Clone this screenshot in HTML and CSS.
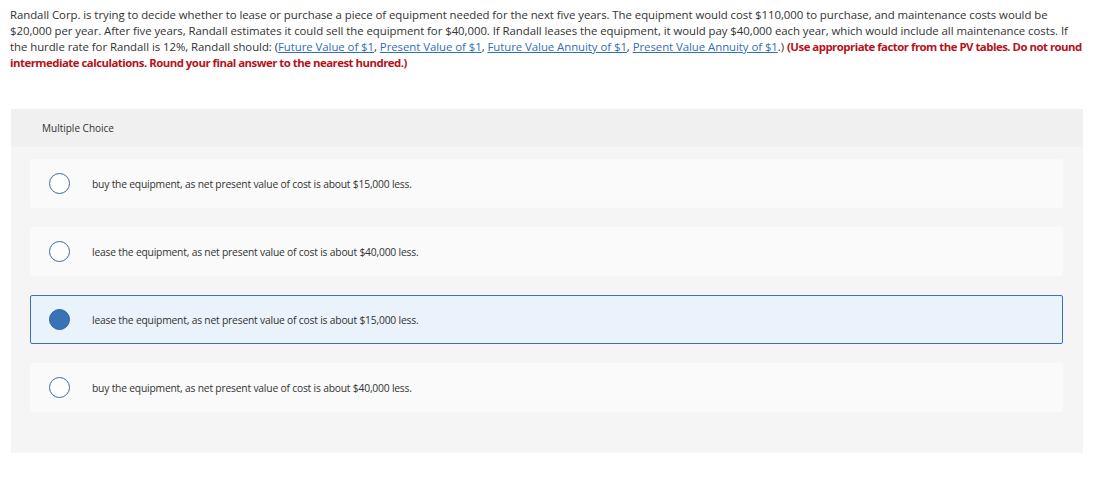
FILE: index.html
```html
<!DOCTYPE html>
<html>
<head>
<meta charset="utf-8">
<link rel="stylesheet" href="styles.css">
</head>
<body>
<div class="question">
<p class="prompt">Randall Corp. is trying to decide whether to lease or purchase a piece of equipment needed for the next five years. The equipment would cost $110,000 to purchase, and maintenance costs would be $20,000 per year. After five years, Randall estimates it could sell the equipment for $40,000. If Randall leases the equipment, it would pay $40,000 each year, which would include all maintenance costs. If the hurdle rate for Randall is 12%, Randall should: (<a href="#">Future Value of $1</a>, <a href="#">Present Value of $1</a>, <a href="#">Future Value Annuity of $1</a>, <a href="#">Present Value Annuity of $1</a>.) <strong class="note">(Use appropriate factor from the PV tables. Do not round intermediate calculations. Round your final answer to the nearest hundred.)</strong></p>
<div class="panel">
<div class="panel-head">Multiple Choice</div>
<div class="choices">
<div class="choice"><span class="radio"></span><span class="label">buy the equipment, as net present value of cost is about $15,000 less.</span></div>
<div class="choice"><span class="radio"></span><span class="label">lease the equipment, as net present value of cost is about $40,000 less.</span></div>
<div class="choice selected"><span class="radio"></span><span class="label">lease the equipment, as net present value of cost is about $15,000 less.</span></div>
<div class="choice"><span class="radio"></span><span class="label">buy the equipment, as net present value of cost is about $40,000 less.</span></div>
</div>
</div>
</div>
</body>
</html>
```
FILE: styles.css
```css
html, body { margin: 0; padding: 0; background: #fff; }
body {
  font-family: "Open Sans", "Liberation Sans", sans-serif;
  color: #333;
}
.question { padding: 7px 0 0 10px; }
.prompt {
  margin: 0;
  width: 1077px;
  font-size: 11.4px;
  line-height: 16px;
  letter-spacing: -0.05px;
}
.prompt a { color: #2f6fb5; text-decoration: underline; }
.note { color: #b5121b; font-weight: 700; letter-spacing: -0.5px; }
.panel {
  margin: 38px 0 0 1px;
  width: 1072px;
  background: #f5f5f5;
}
.panel-head {
  height: 38px;
  background: #f0f0f0;
  padding-left: 31px;
  display: flex;
  align-items: center;
  font-size: 10px;
  color: #333;
}
.choices {
  padding: 12px 20px 41px 19px;
  display: flex;
  flex-direction: column;
  gap: 19px;
}
.choice {
  height: 49px;
  box-sizing: border-box;
  background: #fafafa;
  border-radius: 2px;
  display: flex;
  align-items: center;
  padding-left: 19px;
  font-size: 10.3px;
  color: #333;
}
.choice.selected {
  background: #eaf2fb;
  border: 1px solid #3a72b8;
  padding-left: 18px;
}
.radio {
  width: 21px;
  height: 21px;
  box-sizing: border-box;
  border: 1.5px solid #40699a;
  border-radius: 50%;
  background: #fff;
  flex: none;
  margin-right: 22px;
}
.selected .radio { background: #3873b9; border-color: #2f5f98; }
.label { letter-spacing: -0.2px; }
```
